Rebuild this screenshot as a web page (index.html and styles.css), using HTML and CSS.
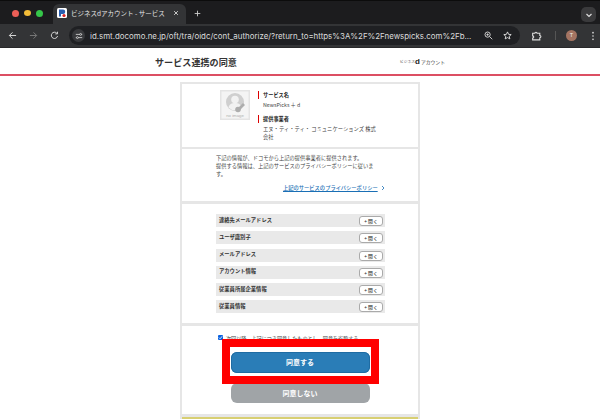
FILE: index.html
```html
<!DOCTYPE html>
<html lang="ja">
<head>
<meta charset="utf-8">
<title>ビジネスdアカウント</title>
<link rel="stylesheet" href="styles.css">
</head>
<body>
<div class="window">
  <div class="tabbar">
    <div class="lights"><span class="light red"></span><span class="light yellow"></span><span class="light green"></span></div>
    <div class="tab">
      <svg class="favicon" viewBox="0 0 10 10"><rect width="10" height="10" rx="1.5" fill="#fff"/><path d="M2 1.5h4a2 2 0 0 1 0 4.5H4v2.5H2z" fill="#2a5fb0"/><circle cx="7" cy="7.5" r="1.6" fill="#d22"/></svg>
      <span class="tab-title">ビジネスdアカウント - サービス</span>
      <svg class="tab-close" viewBox="0 0 8 8"><path d="M1.5 1.5l5 5M6.5 1.5l-5 5" stroke="#e4e4e4" stroke-width="1.1"/></svg>
    </div>
    <svg class="tab-new" viewBox="0 0 8 8"><path d="M4 .8v6.4M.8 4h6.4" stroke="#d0d0d0" stroke-width="1"/></svg>
    <div class="tab-menu"><svg viewBox="0 0 8 8"><path d="M1.5 3l2.5 2.5L6.5 3" fill="none" stroke="#ddd" stroke-width="1.2"/></svg></div>
  </div>
  <div class="toolbar">
    <svg class="nav" viewBox="0 0 10 10"><path d="M9 5H1.5M5 1.5L1.5 5 5 8.5" fill="none" stroke="#d5d5d5" stroke-width="1.1"/></svg>
    <svg class="nav" viewBox="0 0 10 10"><path d="M1 5h7.5M5 1.5L8.5 5 5 8.5" fill="none" stroke="#777" stroke-width="1.1"/></svg>
    <svg class="nav" viewBox="0 0 10 10"><path d="M8.4 5.6A3.5 3.5 0 1 1 7.6 2.5M8.3 .8v2.4H5.9" fill="none" stroke="#d5d5d5" stroke-width="1.1"/></svg>
    <div class="omnibox">
      <div class="site-icon"><svg viewBox="0 0 10 10"><path d="M1 3h5M8 3h1M1 7h1M4 7h5" stroke="#ddd" stroke-width="1"/><circle cx="7" cy="3" r="1.2" fill="none" stroke="#ddd" stroke-width=".9"/><circle cx="3" cy="7" r="1.2" fill="none" stroke="#ddd" stroke-width=".9"/></svg></div>
      <span class="url">id.smt.docomo.ne.jp/oft/tra/oidc/cont_authorize/?return_to=https%3A%2F%2Fnewspicks.com%2Fb...</span>
      <svg class="omni-icon" viewBox="0 0 10 10"><circle cx="4" cy="4" r="2.9" fill="none" stroke="#ddd" stroke-width="1"/><path d="M6.2 6.2L9.2 9.2M2.7 4h2.6M4 2.7v2.6" stroke="#ddd" stroke-width="1"/></svg>
      <svg class="omni-icon star" viewBox="0 0 10 10"><path d="M5 1l1.2 2.7 2.9.3-2.2 1.9.7 2.9L5 7.3 2.4 8.800l.7-2.900L.9 4l2.900-.3z" fill="none" stroke="#e2e2e2" stroke-width="1"/></svg>
    </div>
    <svg class="ext" viewBox="0 0 10 10"><path d="M1.500 3h2a1 1 0 0 1 2 0h2.500v2a1 1 0 0 1 0 2v2H1.500V7.300a1 1 0 0 0 0-2z" fill="none" stroke="#ddd" stroke-width="1"/></svg>
    <span class="divider"></span>
    <span class="avatar">T</span>
    <svg class="more" viewBox="0 0 4 12"><circle cx="2" cy="2" r="1" fill="#ddd"/><circle cx="2" cy="6" r="1" fill="#ddd"/><circle cx="2" cy="10" r="1" fill="#ddd"/></svg>
  </div>
  <div class="page">
    <header class="page-head">
      <h1 class="page-title">サービス連携の同意</h1>
      <div class="brand"><span class="brand-small">ビジネス</span><b class="brand-d">d</b><span class="brand-text">アカウント</span></div>
    </header>
    <main class="card">
      <section class="sec sec-service">
        <svg class="noimage" viewBox="0 0 30 30">
          <rect width="30" height="30" fill="#e4e4e4"/>
          <rect x="1.500" y="1.500" width="27" height="27" fill="#f4f4f4"/>
          <circle cx="15" cy="12" r="9" fill="#cfcfcf"/>
          <circle cx="15" cy="9.500" r="3.800" fill="#f2f2f2"/>
          <path d="M8.500 17.500c1-3.500 3.200-4.500 6.500-4.500s5.500 1 6.500 4.500a9 9 0 0 1-13 0z" fill="#f2f2f2"/>
          <path d="M17 19l6-6 2 2-6 6z" fill="#adadad"/>
          <circle cx="18" cy="19.500" r="2.800" fill="#adadad"/>
          <text x="15" y="27.300" class="noimage-text" text-anchor="middle">no image</text>
        </svg>
        <div class="service-info">
          <h2 class="label">サービス名</h2>
          <p class="value value-first">NewsPicks ＋ d</p>
          <h2 class="label">提供事業者</h2>
          <p class="value">エヌ・ティ・ティ・ コミュニケーションズ 株式<br>会社</p>
        </div>
      </section>
      <section class="sec sec-notice">
        <p class="notice">下記の情報が、ドコモから上記の提供事業者に提供されます。<br>提供する情報は、上記のサービスのプライバシーポリシーに従いま<br>す。</p>
        <a class="policy" href="#">上記のサービスのプライバシーポリシー</a>
        <svg class="policy-arrow" viewBox="0 0 6 8"><path d="M1.500 1L4.500 4 1.500 7" fill="none" stroke="#1a6fb5" stroke-width="1.200"/></svg>
      </section>
      <section class="sec sec-list">
        <div class="row"><span class="row-name">連絡先メールアドレス</span><span class="open">+ 開く</span></div>
        <div class="row"><span class="row-name">ユーザ識別子</span><span class="open">+ 開く</span></div>
        <div class="row"><span class="row-name">メールアドレス</span><span class="open">+ 開く</span></div>
        <div class="row"><span class="row-name">アカウント情報</span><span class="open">+ 開く</span></div>
        <div class="row"><span class="row-name">従業員所属企業情報</span><span class="open">+ 開く</span></div>
        <div class="row"><span class="row-name">従業員情報</span><span class="open">+ 開く</span></div>
      </section>
      <section class="sec sec-actions">
        <label class="check"><span class="checkbox"><svg viewBox="0 0 6 6"><path d="M1 3l1.500 1.500L5 1.500" fill="none" stroke="#fff" stroke-width="1"/></svg></span>次回以降、上記につき同意したものとし、同意を省略する</label>
        <div class="btn btn-agree">同意する</div>
        <div class="btn btn-deny">同意しない</div>
        <div class="highlight"></div>
      </section>
      <div class="yellow"></div>
    </main>
  </div>
</div>
</body>
</html>
```
FILE: styles.css
```css
* { box-sizing: border-box; margin: 0; padding: 0; }
html, body { width: 600px; height: 419px; overflow: hidden; background: #fff; }
body { font-family: "Noto Sans CJK JP", "Liberation Sans", sans-serif; color: #333; }
.window { width: 600px; height: 419px; display: flex; flex-direction: column; overflow: hidden; }

.tabbar { height: 24px; background: #1c1c1e; display: flex; align-items: flex-end; flex: none; border-top: 1px solid #0c0c0c; }
.lights { display: flex; gap: 5px; padding: 0 0 7px 12px; width: 53px; flex: none; }
.light { width: 7px; height: 7px; border-radius: 50%; }
.light.red { background: #ec5f57; }
.light.yellow { background: #f4bd38; }
.light.green { background: #35c649; }
.tab { width: 133px; height: 20px; background: #333436; border-radius: 6px 6px 0 0; display: flex; align-items: center; padding: 0 6px 3px 4px; flex: none; }
.favicon { width: 10px; height: 10px; flex: none; }
.tab-title { font: 6.500px/10px "Noto Sans CJK JP", sans-serif; color: #e6e6e6; margin-left: 4px; white-space: nowrap; flex: none; }
.tab-close { width: 6px; height: 6px; margin-left: auto; margin-right: 1px; flex: none; }
.tab-new { width: 7px; height: 7px; margin: 0 0 7px 8px; flex: none; }
.tab-menu { width: 15px; height: 15px; background: #3a3a3c; border-radius: 5px; margin: 0 4px 2px auto; display: flex; align-items: center; justify-content: center; }
.tab-menu svg { width: 8px; height: 8px; }

.toolbar { height: 24px; background: #333436; display: flex; align-items: center; flex: none; padding-left: 8px; border-bottom: 1px solid #28282a; }
.nav { width: 9px; height: 9px; margin-right: 12px; flex: none; }
.omnibox { width: 451px; height: 19px; margin-left: -2px; background: #1f2023; border-radius: 10px; display: flex; align-items: center; flex: none; padding-left: 3px; }
.site-icon { width: 13px; height: 13px; background: #38393c; border-radius: 50%; display: flex; align-items: center; justify-content: center; flex: none; }
.site-icon svg { width: 8px; height: 8px; }
.url { font: 7.900px/12px "Inter", "Liberation Sans", sans-serif; color: #dcdcdc; margin-left: 5px; width: 389px; white-space: nowrap; flex: none; }
.omni-icon { width: 9px; height: 9px; margin-left: 5px; flex: none; }
.omni-icon.star { margin-left: 10px; }
.ext { width: 11px; height: 11px; margin-left: 11px; flex: none; }
.divider { width: 1px; height: 9px; background: #555; margin-left: 13px; flex: none; }
.avatar { width: 11px; height: 11px; border-radius: 50%; background: #a47462; color: #eee; font: 5.500px/11px "Liberation Sans", sans-serif; text-align: center; margin-left: 10px; flex: none; }
.more { width: 4px; height: 10px; margin-left: 14px; flex: none; }

.page { flex: 1; background: #fff; min-height: 0; }
.page-head { height: 28px; border-bottom: 2px solid #dc4f63; display: flex; align-items: center; padding-top: 1px; }
.page-title { font-size: 9.100px; font-weight: 700; color: #333; margin-left: 155px; line-height: 12px; flex: none; }
.brand { display: flex; align-items: center; margin-left: 163px; line-height: 10px; flex: none; }
.brand-small { font-size: 3.800px; color: #555; }
.brand-d { font: 700 8px/10px "Liberation Sans", sans-serif; color: #222; margin: 0 1px 0 0; }
.brand-text { font-size: 4.800px; color: #333; }

.card { width: 240px; margin: 6px 0 0 180px; border: 2px solid #e6e6e6; border-bottom: none; background: #e6e6e6; display: flex; flex-direction: column; }
.sec { background: #fff; }
.sec-service { height: 63px; margin-bottom: 2px; display: flex; padding: 6px 0 0 38px; }
.noimage { width: 30px; height: 30px; flex: none; }
.noimage-text { font: 4.300px "Liberation Sans", sans-serif; fill: #b0b0b0; }
.service-info { margin-left: 8px; width: 128px; }
.label { font-size: 5.200px; line-height: 8px; font-weight: 700; color: #222; border-left: 1px solid #d00; padding-left: 4px; margin-top: 1px; }
.value { font-size: 5.300px; line-height: 8px; color: #444; padding-left: 5px; margin-top: 2px; white-space: nowrap; }
.value-first { margin-bottom: 6px; }
.sec-notice { height: 52px; margin-bottom: 3px; padding: 5px 0 0 34px; position: relative; }
.notice { font-size: 5.250px; line-height: 8px; color: #444; white-space: nowrap; }
.policy { display: block; font-size: 5.280px; line-height: 8px; font-weight: 500; color: #1a6fb5; text-decoration: underline; margin: 6px 0 0 67px; white-space: nowrap; }
.policy-arrow { position: absolute; left: 199px; top: 36px; width: 4px; height: 6px; }
.sec-list { height: 119px; margin-bottom: 3px; padding: 10px 33px 0 34px; display: flex; flex-direction: column; gap: 4.300px; }
.row { height: 13px; background: #e9e9e9; display: flex; align-items: center; justify-content: space-between; padding: 0 2px 0 3px; flex: none; }
.row-name { font-size: 5.300px; line-height: 8px; font-weight: 700; color: #333; margin-top: -2px; white-space: nowrap; }
.open { width: 24px; height: 10px; background: #fff; border: 1px solid #aaa; border-radius: 3px; font-size: 4.800px; font-weight: 500; line-height: 8px; text-align: center; color: #333; margin-top: 1px; white-space: nowrap; }
.sec-actions { height: 88px; margin-bottom: 3px; padding-top: 8px; position: relative; display: flex; flex-direction: column; align-items: center; }
.check { font-size: 5.100px; line-height: 7px; color: #444; display: flex; align-items: center; white-space: nowrap; width: 168px; margin-left: 4px; margin-bottom: 11px; }
.checkbox { width: 5px; height: 5px; background: #0b62e0; border-radius: 1px; display: block; margin-right: 3px; flex: none; }
.checkbox svg { display: block; width: 5px; height: 5px; }
.btn { width: 139px; height: 21px; border-radius: 6px; color: #fff; font-size: 7px; font-weight: 700; line-height: 21px; text-align: center; flex: none; }
.btn-agree { background: #2a7db7; box-shadow: inset 0 0 0 1px #1f6ca3; margin-bottom: 10px; }
.btn-deny { background: #a0a4a7; height: 20px; line-height: 20px; }
.highlight { position: absolute; left: 40px; top: 13px; width: 157px; height: 45px; border: 8px solid #f00; }
.yellow { height: 6px; background: #d8cf72; flex: none; }
```
